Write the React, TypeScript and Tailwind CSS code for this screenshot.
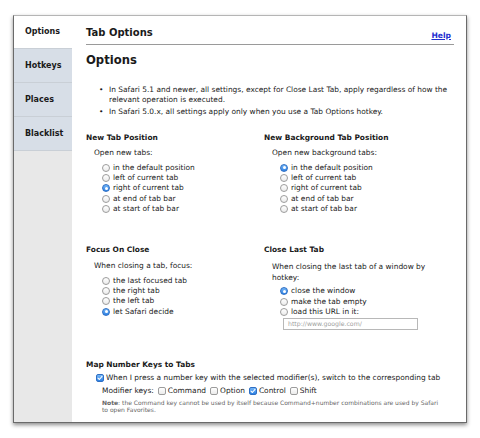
import React from 'react'

const font = "font-['DejaVu_Sans',Verdana,sans-serif]"

function Radio({ checked }: { checked?: boolean }) {
  if (checked) {
    return (
      <span className="w-[8px] h-[8px] shrink-0 rounded-full border border-[#2f6fc4] bg-linear-to-b from-[#74b6f7] to-[#2d82e4] flex items-center justify-center">
        <span className="w-[3px] h-[3px] rounded-full bg-white" />
      </span>
    )
  }
  return <span className="w-[8px] h-[8px] shrink-0 rounded-full border border-[#9c9c9c] bg-linear-to-b from-white to-[#ebebeb]" />
}

function Check({ checked }: { checked?: boolean }) {
  if (checked) {
    return (
      <span className="w-[8px] h-[8px] shrink-0 rounded-[2px] border border-[#2f6fc4] bg-linear-to-b from-[#74b6f7] to-[#2d82e4] flex items-center justify-center">
        <svg viewBox="0 0 8 8" className="w-[6px] h-[6px]">
          <path d="M1.3 4.2 L3.2 6 L6.7 1.8" fill="none" stroke="white" strokeWidth="1.4" strokeLinecap="round" strokeLinejoin="round" />
        </svg>
      </span>
    )
  }
  return <span className="w-[8px] h-[8px] shrink-0 rounded-[2px] border border-[#9c9c9c] bg-linear-to-b from-white to-[#ebebeb]" />
}

function RadioList({ items, selected, gap }: { items: string[]; selected: number; gap: string }) {
  return (
    <div className={'pl-[8px] ' + gap}>
      {items.map((t, i) => (
        <div key={t} className="h-[10.4px] flex items-center gap-[3px]">
          <Radio checked={i === selected} />
          <span className="whitespace-nowrap">{t}</span>
        </div>
      ))}
    </div>
  )
}

const tabs = ['Options', 'Hotkeys', 'Places', 'Blacklist']
const positions = ['in the default position', 'left of current tab', 'right of current tab', 'at end of tab bar', 'at start of tab bar']

export default function App() {
  return (
    <div className={`w-[480px] h-[438px] bg-white pt-[15px] pl-[13px] ${font} text-[#1a1a1a]`}>
      <div className="w-[454px] h-[408px] flex border border-[#6a6a6a] border-t-[#b5b5b5] shadow-[0_2px_4px_rgba(0,0,0,0.45)] overflow-hidden">
        {/* Sidebar */}
        <div className="w-[58px] shrink-0 bg-[#e8e8e8] flex flex-col">
          {tabs.map((t, i) => (
            <div
              key={t}
              className={
                'flex items-center pl-[11px] text-[8px] font-bold border-b border-[#c9cfd6] ' +
                (i === 0 ? 'h-[33px] bg-white' : 'h-[34px] bg-[#d7dee7]')
              }
            >
              {t}
            </div>
          ))}
        </div>

        {/* Content */}
        <div className="flex-1 bg-white pl-[14px] pr-[12px] text-[7.45px]">
          <div className="h-[29px] flex items-end justify-between border-b border-[#9a9a9a] pb-[4px]">
            <span className="text-[10px] font-bold leading-[14px]">Tab Options</span>
            <a className="text-[7.6px] font-bold underline text-[#1f2fd0] leading-[10px] mb-[-1px] mr-[3px]">Help</a>
          </div>

          <div className="mt-[6px] text-[11.6px] font-bold leading-[18px]">Options</div>

          <div className="mt-[16px] leading-[10px]">
            <div className="flex pl-[13px]">
              <span className="w-[10px] shrink-0">•</span>
              <span className="whitespace-nowrap">
                In Safari 5.1 and newer, all settings, except for Close Last Tab, apply regardless of how the
                <br />
                relevant operation is executed.
              </span>
            </div>
            <div className="flex pl-[13px] mt-[2px]">
              <span className="w-[10px] shrink-0">•</span>
              <span className="whitespace-nowrap">In Safari 5.0.x, all settings apply only when you use a Tab Options hotkey.</span>
            </div>
          </div>

          <div className="mt-[16px] grid grid-cols-[178px_1fr] leading-[10px]">
            <div>
              <div className="font-bold">New Tab Position</div>
              <div className="pl-[8px] mt-[5px]">
                <div>Open new tabs:</div>
                <RadioList items={positions} selected={2} gap="mt-[4.5px]" />
              </div>
            </div>
            <div>
              <div className="font-bold">New Background Tab Position</div>
              <div className="pl-[8px] mt-[5px]">
                <div>Open new background tabs:</div>
                <RadioList items={positions} selected={0} gap="mt-[4.5px]" />
              </div>
            </div>
          </div>

          <div className="mt-[31px] grid grid-cols-[178px_1fr] leading-[10px]">
            <div>
              <div className="font-bold">Focus On Close</div>
              <div className="pl-[8px] mt-[6px]">
                <div>When closing a tab, focus:</div>
                <RadioList items={['the last focused tab', 'the right tab', 'the left tab', 'let Safari decide']} selected={3} gap="mt-[4px]" />
              </div>
            </div>
            <div>
              <div className="font-bold">Close Last Tab</div>
              <div className="pl-[8px] mt-[6px]">
                <div className="leading-[11px] whitespace-nowrap">
                  When closing the last tab of a window by
                  <br />
                  hotkey:
                </div>
                <RadioList items={['close the window', 'make the tab empty', 'load this URL in it:']} selected={0} gap="mt-[2.5px]" />
                <div className="ml-[11px] mt-[1px] w-[135px] h-[12px] border border-[#b8b8b8] flex items-center pl-[4px] text-[6.2px] text-[#a0a0a0]">
                  http://www.google.com/
                </div>
              </div>
            </div>
          </div>

          <div className="mt-[30px] leading-[10px]">
            <div className="font-bold">Map Number Keys to Tabs</div>
            <div className="pl-[10px] mt-[3px] flex items-center gap-[2px] h-[10px] whitespace-nowrap">
              <Check checked />
              <span>When I press a number key with the selected modifier(s), switch to the corresponding tab</span>
            </div>
            <div className="pl-[16px] mt-[3px] flex items-center h-[10px] whitespace-nowrap">
              <span className="mr-[4px]">Modifier keys:</span>
              <span className="flex items-center gap-[2px] mr-[4px]"><Check /> Command</span>
              <span className="flex items-center gap-[2px] mr-[4px]"><Check /> Option</span>
              <span className="flex items-center gap-[2px] mr-[4px]"><Check checked /> Control</span>
              <span className="flex items-center gap-[2px]"><Check /> Shift</span>
            </div>
            <div className="pl-[16px] mt-[3px] text-[6px] leading-[7px] text-[#666] whitespace-nowrap">
              <span className="font-bold">Note</span>: the Command key cannot be used by itself because Command+number combinations are used by Safari
              <br />
              to open Favorites.
            </div>
          </div>
        </div>
      </div>
    </div>
  )
}
